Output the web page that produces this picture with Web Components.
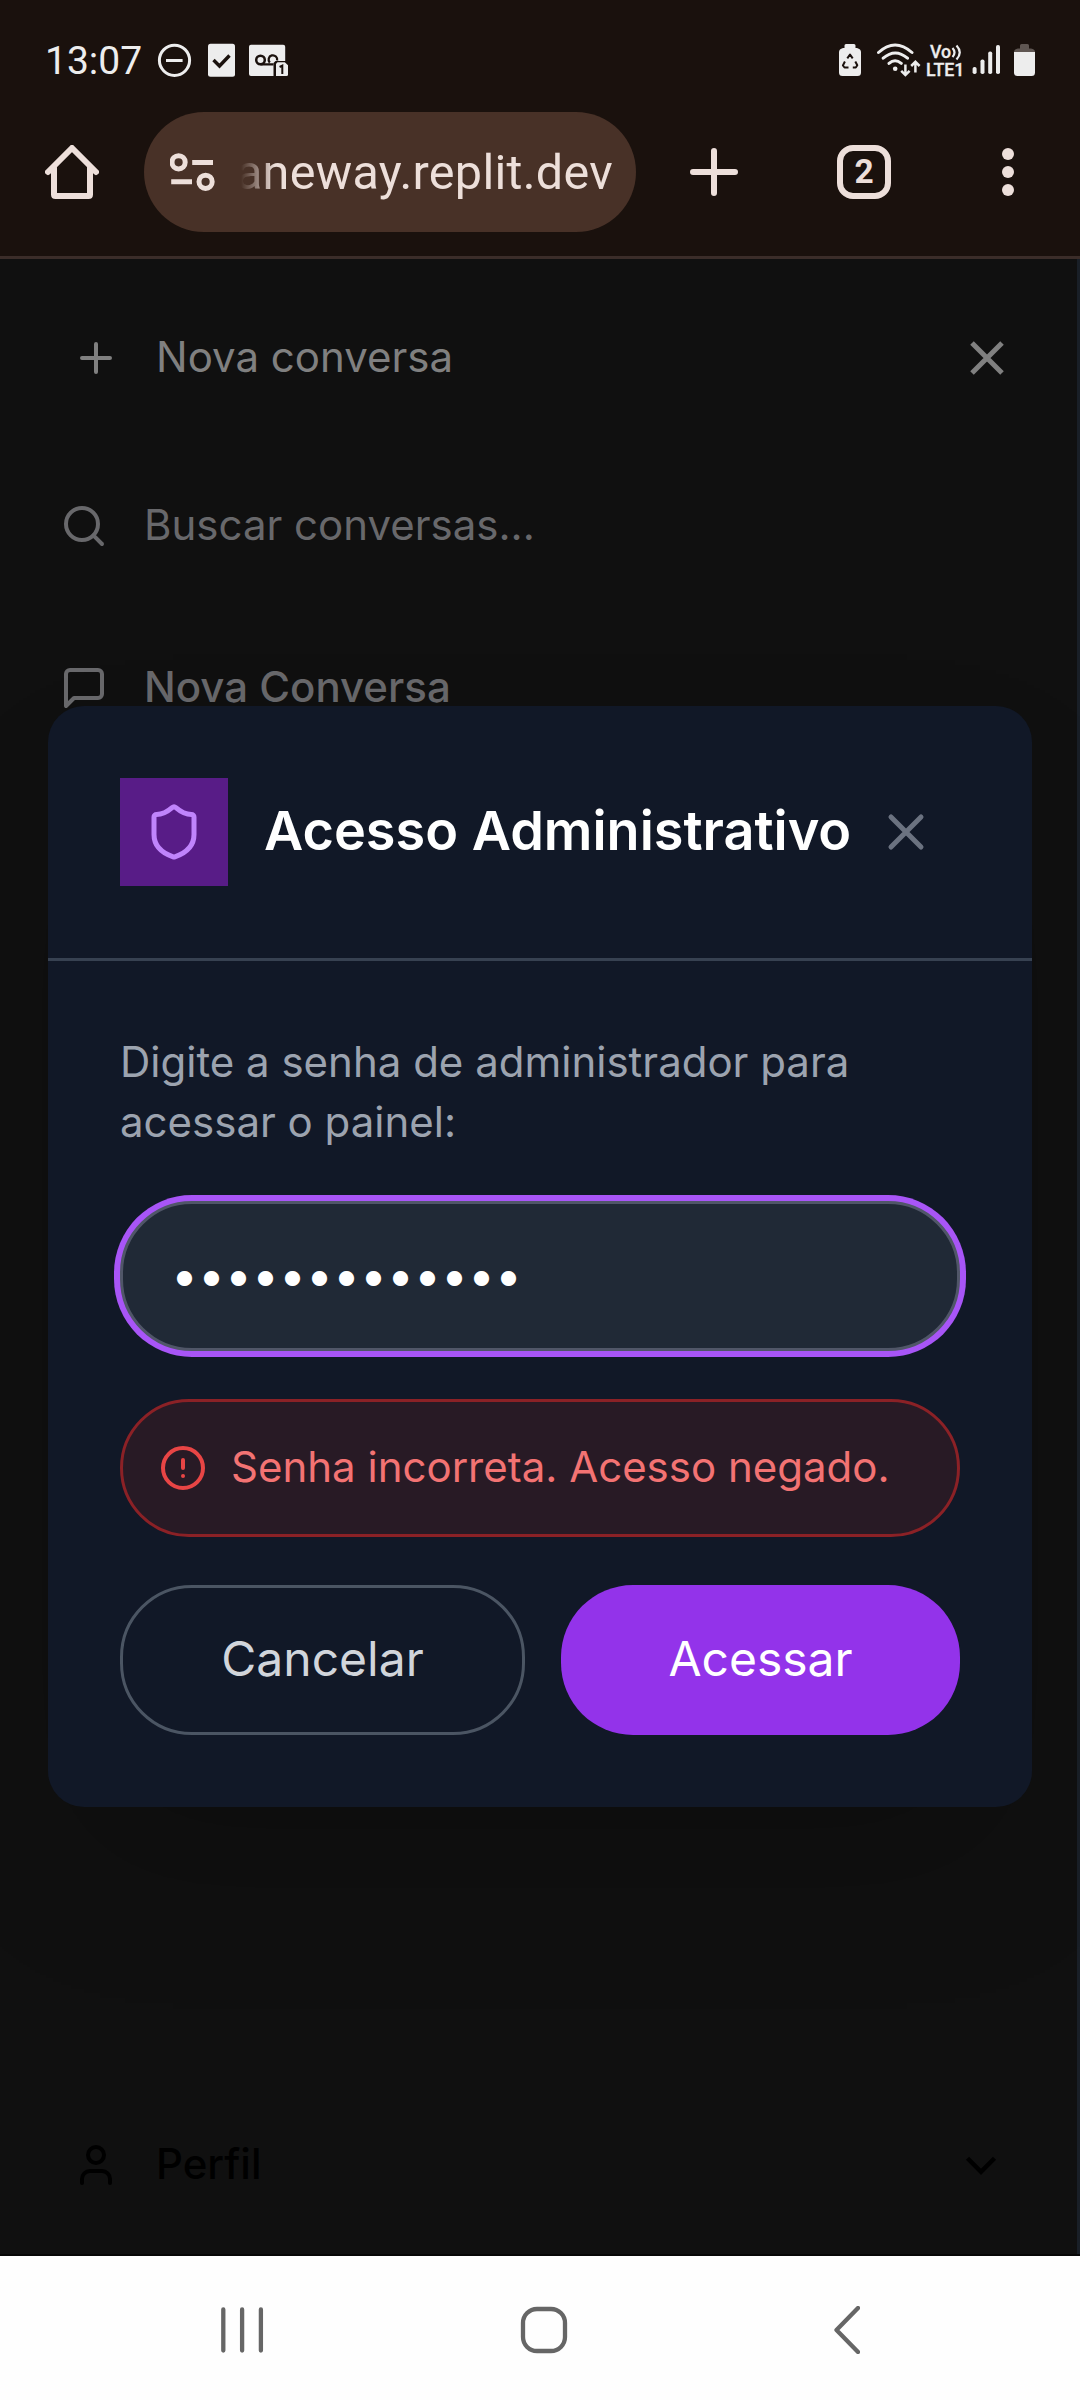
<!DOCTYPE html>
<html lang="pt-BR">
<head>
<meta charset="utf-8">
<title>Acesso Administrativo</title>
<style>
html,body{margin:0;padding:0;background:#101010}
body{width:1080px;height:2400px;overflow:hidden;font-family:Inter,"Noto Sans",sans-serif}
</style>
</head>
<body>
<phone-screen></phone-screen>
<script>
const define = (name, css, html, setup) => {
  const tpl = document.createElement('template');
  tpl.innerHTML = `<style>*{box-sizing:border-box}${css}</style>${html}`;
  customElements.define(name, class extends HTMLElement {
    constructor() {
      super();
      this.attachShadow({mode: 'open'}).appendChild(tpl.content.cloneNode(true));
    }
    connectedCallback() { if (setup) setup(this, this.shadowRoot); }
  });
};

const glyphs = {
  plus: '<path d="M5 12h14M12 5v14"/>',
  close: '<path d="M18 6 6 18M6 6l12 12"/>',
  search: '<circle cx="11" cy="11" r="8"/><path d="m21 21-4.3-4.3"/>',
  message: '<path d="M21 15a2 2 0 0 1-2 2H7l-4 4V5a2 2 0 0 1 2-2h14a2 2 0 0 1 2 2z"/>',
  shield: '<path d="M20 13c0 5-3.5 7.5-7.66 8.95a1 1 0 0 1-.67-.01C7.5 20.5 4 18 4 13V6a1 1 0 0 1 1-1c2 0 4.5-1.2 6.24-2.72a1.17 1.17 0 0 1 1.52 0C14.51 3.81 17 5 19 5a1 1 0 0 1 1 1z"/>',
  alert: '<circle cx="12" cy="12" r="10"/><path d="M12 8v4M12 16h.01"/>',
  user: '<path d="M19 21v-2a4 4 0 0 0-4-4H9a4 4 0 0 0-4 4v2"/><circle cx="12" cy="7" r="4"/>',
  chevron: '<path d="m6 9 6 6 6-6"/>'
};
define('ui-icon', ':host{display:block;flex:none}svg{display:block;width:100%;height:100%}',
  '<svg viewBox="0 0 24 24" fill="none" stroke="currentColor" stroke-width="2"></svg>',
  (el, root) => {
    const s = el.getAttribute('size') + 'px', svg = root.querySelector('svg');
    el.style.width = s; el.style.height = s;
    const sharp = el.hasAttribute('sharp');
    svg.setAttribute('stroke-linecap', sharp ? 'butt' : 'round');
    svg.setAttribute('stroke-linejoin', sharp ? 'miter' : 'round');
    svg.innerHTML = glyphs[el.getAttribute('name')];
  });

define('status-bar', `
:host{display:flex;justify-content:space-between;height:112px;padding:40px 44px 0 45px;color:#ededed;font-family:Roboto,sans-serif}
div{display:flex;align-items:flex-start;height:40px}
svg{display:block}
.time{font-size:39px;line-height:42px;width:111px;white-space:nowrap}
.net{display:flex;flex-direction:column;height:40px;width:42px;font-size:17.8px;line-height:17px;font-weight:500;padding-top:3px;white-space:nowrap;-webkit-text-stroke:.3px #ededed}
.vo{padding-left:4px;display:flex}`, `
<div><span class="time">13:07</span>
<svg width="136" height="40" viewBox="156 40 136 40" fill="none" stroke="#ededed">
<circle cx="174.5" cy="60.3" r="15.1" stroke-width="3"/><path d="M166 60.5h16.6" stroke-width="3"/>
<rect x="208" y="43.8" width="27" height="33" rx="2.5" fill="#ededed" stroke="none"/>
<path d="m213.500 60 6 6 10-10.500" stroke="#1a110d" stroke-width="3.400"/>
<path d="M251 44.700h32.200a2 2 0 0 1 2 2V61H275.500l-2 2V76H251a2 2 0 0 1-2-2V46.700a2 2 0 0 1 2-2z" fill="#ededed" stroke="none"/>
<circle cx="260.500" cy="60" r="4.300" stroke="#1a110d" stroke-width="2.500"/>
<path d="M260.500 64.400h13M269.800 62.600a4.300 4.300 0 1 1 7.300-2" stroke="#1a110d" stroke-width="2.300"/>
<path d="M277.500 62.200h7.300l3.200 3V74.500a1.500 1.500 0 0 1-1.500 1.500H276V63.700z" fill="#ededed" stroke="none"/>
<path d="m279.600 67 2.700-1.300V74" stroke="#1a110d" stroke-width="2"/>
</svg></div>
<div>
<svg width="87" height="40" viewBox="839 40 87 40" fill="none" stroke="#ededed" stroke-linecap="round">
<path d="M847 44h7q1.500 0 1.500 1.500V48h1.500q4 1 4 4V72.500q0 3.500-3.500 3.500h-15q-3.500 0-3.500-3.500V52q0-3 4-4h1.500v-2.500q0-1.500 1.500-1.500z" fill="#ededed" stroke="none"/>
<path d="M847.300 58.400 850 54.500l2.700 3.900M855.300 61.500l2 3.800-1.500 2.200h-3M848.500 67.500h-4l-1.600-2 2-4" stroke="#1a110d" stroke-width="2" stroke-linejoin="round" stroke-linecap="butt"/>
<path d="M878.500 52.500q16.500-15 33.500 0M883.200 58.200q12-10.500 24.300 0M889 63.400q6-5.300 12.300 0" stroke-width="3"/>
<circle cx="895.200" cy="68.700" r="2.300" fill="#ededed" stroke="none"/>
<path d="M905.400 64.500V74.500M901.200 70.800l4.200 4.200 4.200-4.200M915.400 72.500V62M911.200 66l4.200-4.200 4.200 4.200" stroke-width="2.500" stroke-linecap="butt"/>
</svg>
<span class="net"><span class="vo">Vo<svg width="12" height="18" viewBox="0 0 12 18" fill="none" stroke="#ededed" stroke-width="2.200"><path d="M1.500 5q4 4.500 0 9M5.500 2.500q6.500 7 0 14"/></svg></span><span>LTE1</span></span>
<svg width="68" height="40" viewBox="968 40 68 40" fill="#ededed">
<rect x="972.600" y="67" width="4" height="7" rx="1.800"/><rect x="980.500" y="59.500" width="4" height="14.500" rx="1.800"/><rect x="988.200" y="51.500" width="4" height="22.500" rx="1.800"/><rect x="996" y="45" width="4" height="29" rx="1.800"/>
<path d="M1014 52q0-3 4-3.500h2V45.500q0-1.500 1.500-1.500h6q1.500 0 1.500 1.500V48.500h2q4 .5 4 3.500z" fill="#5f5652"/>
<path d="M1014 52h21v20.500q0 3.500-3.500 3.500h-14q-3.500 0-3.500-3.500z"/>
</svg></div>`);

define('browser-bar', `
:host{display:flex;height:147px;border-bottom:3px solid #3b2d29;padding-bottom:24px;align-items:center;color:#eddfda;font-family:Roboto,sans-serif}
svg{display:block;flex:none}
.home{margin:0 45px}
.url{display:flex;align-items:center;width:492px;height:120px;border-radius:60px;background:#483127;padding:0 23px 0 26px;overflow:hidden}
.clip{display:flex;justify-content:flex-end;flex:1;min-width:0;margin-left:24px;white-space:nowrap;font-size:48.5px;letter-spacing:.3px;line-height:64px;padding-top:1px;-webkit-mask-image:linear-gradient(90deg,transparent 2px,#000 36px)}
.plus{margin:0 99px 0 54px}
.tabs{display:flex;align-items:center;justify-content:center;width:54px;height:54px;border:6px solid #eddfda;border-radius:16px;font-size:33.500px;line-height:40px;font-weight:700}
.more{margin-left:111px}`, `
<svg class="home" width="54" height="54" viewBox="0 0 54 54" fill="none" stroke="#eddfda" stroke-width="6" stroke-linecap="round" stroke-linejoin="round"><path d="M3 27 27 3l24 24"/><path d="M9 23V49.500Q9 51 10.500 51H43.500Q45 51 45 49.500V23"/></svg>
<div class="url">
<svg width="45" height="40" viewBox="170 152 45 40" fill="none" stroke="#eddfda" stroke-width="5"><circle cx="178.600" cy="162.300" r="6.600"/><path d="M192.200 162.500h20.800M171.200 181.700h20.800"/><circle cx="205.600" cy="181.800" r="6.600"/></svg>
<span class="clip"><span>aneway.replit.dev</span></span></div>
<svg class="plus" width="48" height="48" viewBox="0 0 48 48" stroke="#eddfda" stroke-width="6" stroke-linecap="round"><path d="M24 3v42M3 24h42"/></svg>
<span class="tabs"><span>2</span></span>
<svg class="more" width="12" height="48" viewBox="0 0 12 48" fill="#eddfda"><circle cx="6" cy="6" r="6"/><circle cx="6" cy="24" r="6"/><circle cx="6" cy="42" r="6"/></svg>`);

define('drawer-row', `
:host{display:flex;align-items:center;gap:36px;font-size:42px;line-height:60px;white-space:nowrap}
.label{flex:1;padding-bottom:2px}`, `
<slot name="icon"></slot><span class="label"><slot></slot></span><slot name="end"></slot>`);

define('chat-drawer', `
:host{display:flex;flex-direction:column;height:1995px;border-right:3px solid #191f27;padding-top:39px;background:#101010}
.new{height:120px;padding:0 60px 0 72px;color:#808080}
.search{height:96px;margin-top:60px;padding:0 60px;color:#68686b}
.item{height:96px;margin-top:66px;padding:0 60px;color:#68686b;font-weight:500}
.profile{height:120px;margin:auto 0 29px;padding:0 69px 0 72px;color:#000;font-weight:500}`, `
<drawer-row class="new"><ui-icon slot="icon" name="plus" size="48"></ui-icon>Nova conversa<ui-icon slot="end" name="close" size="60" sharp></ui-icon></drawer-row>
<drawer-row class="search"><ui-icon slot="icon" name="search" size="48"></ui-icon>Buscar conversas...</drawer-row>
<drawer-row class="item"><ui-icon slot="icon" name="message" size="48"></ui-icon>Nova Conversa</drawer-row>
<drawer-row class="profile"><ui-icon slot="icon" name="user" size="48"></ui-icon>Perfil<ui-icon slot="end" name="chevron" size="54" sharp></ui-icon></drawer-row>`);

define('password-field', `
:host{display:flex;align-items:center;height:150px;border:3px solid #505668;border-radius:72px;background:#202936;box-shadow:0 0 0 6px #a855f7;padding:0 48px 2px;color:#fff;font-size:48px;line-height:72px;white-space:nowrap}`,
  `<span>•••••••••••••</span>`);

define('error-notice', `
:host{display:flex;align-items:center;gap:24px;height:138px;border:3px solid #8b2126;border-radius:72px;background:#281a25;padding:0 36px;color:#f37373;font-size:42px;line-height:60px;white-space:nowrap}
ui-icon{color:#e84545}span{padding-bottom:2px}`,
  `<ui-icon name="alert" size="48"></ui-icon><span><slot></slot></span>`);

define('pill-button', `
:host{display:flex;align-items:center;justify-content:center;flex:1 1 0;height:150px;border-radius:72px;padding:0 48px 2px;background:#9333ea;color:#fff;font-size:48px;line-height:72px;white-space:nowrap}
:host([outline]){background:none;border:3px solid #4b5563;color:#d1d5db}`, `<slot></slot>`);

define('admin-modal', `
:host{display:flex;flex-direction:column;width:984px;border-radius:36px;background:#111827;box-shadow:0 75px 150px -36px rgba(0,0,0,.22);overflow:hidden}
header{display:flex;align-items:center;height:255px;border-bottom:3px solid #374151;padding:0 72px}
.badge{display:flex;align-items:center;justify-content:center;width:108px;height:108px;background:#581c87;color:#c084fc;margin-right:36px}
h2{margin:0;flex:1;padding-bottom:2px;color:#fff;font-size:54px;line-height:84px;font-weight:600;white-space:nowrap}
.x{color:#6b7280;padding:24px;margin-left:-40px}
.body{display:flex;flex-direction:column;gap:48px;padding:71px 72px 72px}
p{margin:0;padding-bottom:1px;color:#9ca3af;font-size:42px;line-height:60px}
.actions{display:flex;gap:36px}`, `
<header><span class="badge"><ui-icon name="shield" size="60"></ui-icon></span><h2>Acesso Administrativo</h2><span class="x"><ui-icon name="close" size="60"></ui-icon></span></header>
<div class="body"><p>Digite a senha de administrador para<br>acessar o painel:</p>
<password-field></password-field>
<error-notice>Senha incorreta. Acesso negado.</error-notice>
<div class="actions"><pill-button outline>Cancelar</pill-button><pill-button>Acessar</pill-button></div></div>`);

define('nav-bar', `
:host{display:flex;align-items:center;height:144px;padding:4px 220px 0 220px;background:#fefefe}
svg{display:block;flex:none}.home{margin:0 266px 0 256px}`, `
<svg width="44" height="48" viewBox="0 0 44 48" stroke="#666" stroke-width="4.300" stroke-linecap="round"><path d="M3.300 3.500v41M22.100 3.500v41M40.900 3.500v41"/></svg>
<svg class="home" width="48" height="48" viewBox="0 0 48 48" fill="none" stroke="#666" stroke-width="4.300"><rect x="3" y="3" width="42" height="42" rx="14"/></svg>
<svg width="26" height="48" viewBox="0 0 26 48" fill="none" stroke="#666" stroke-width="4.300" stroke-linecap="round" stroke-linejoin="round"><path d="M24 2 2.500 24 24 46"/></svg>`);

define('phone-screen', `
:host{display:flex;flex-direction:column;width:1080px;height:2400px}
.top{background:#1a110d}
.page{position:relative;height:1997px;background:#070707}
.overlay{position:absolute;inset:0 0 2px;display:flex;align-items:center;justify-content:center;overflow:hidden}`, `
<div class="top"><status-bar></status-bar><browser-bar></browser-bar></div>
<div class="page"><chat-drawer></chat-drawer><div class="overlay"><admin-modal></admin-modal></div></div>
<nav-bar></nav-bar>`);
</script>
</body>
</html>
